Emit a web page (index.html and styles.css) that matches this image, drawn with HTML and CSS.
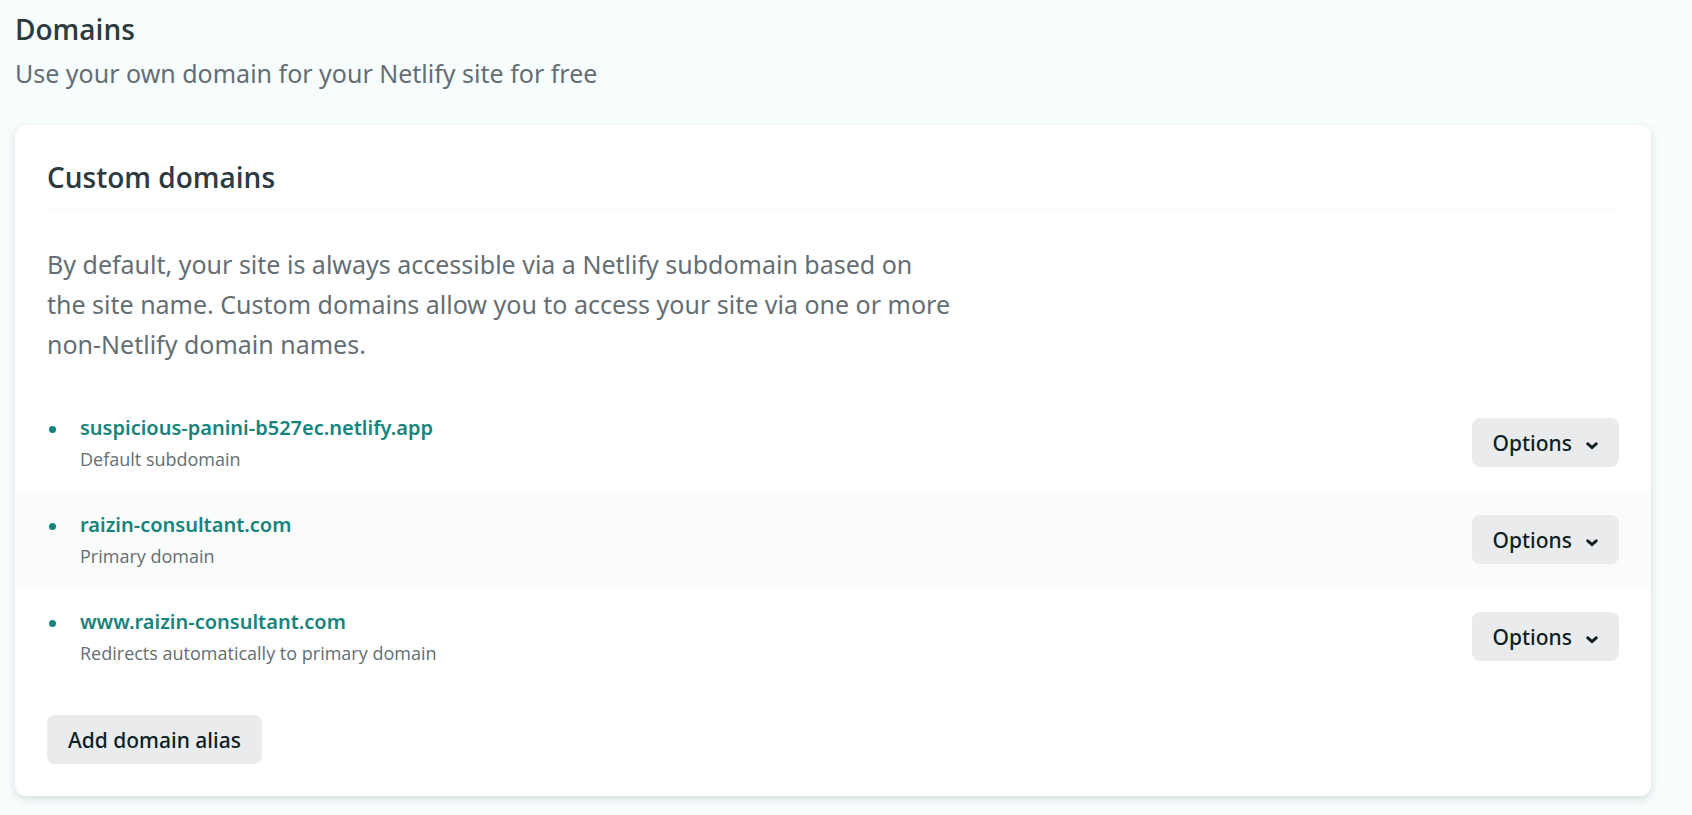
FILE: index.html
```html
<!DOCTYPE html>
<html lang="en">
<head>
<meta charset="utf-8">
<meta name="viewport" content="width=device-width, initial-scale=1">
<title>Domains</title>
<link rel="stylesheet" href="styles.css">
</head>
<body>
<main class="page">
  <header class="page-header">
    <h1 class="title">Domains</h1>
    <p class="lead">Use your own domain for your Netlify site for free</p>
  </header>
  <section class="card" aria-labelledby="custom-domains">
    <h2 class="title card-title" id="custom-domains">Custom domains</h2>
    <p class="lead card-text">By default, your site is always accessible via a Netlify subdomain based on the site name. Custom domains allow you to access your site via one or more non-Netlify domain names.</p>
    <ul class="domains">
      <li class="domain">
        <span class="bullet"></span>
        <div class="domain-info">
          <a class="domain-link" href="#">suspicious-panini-b527ec.netlify.app</a>
          <p class="domain-note">Default subdomain</p>
        </div>
        <button class="button" type="button">Options <svg class="chevron" viewBox="0 0 12 8" aria-hidden="true"><path d="M1.8 1.8 6 5.6l4.2-3.8"/></svg></button>
      </li>
      <li class="domain">
        <span class="bullet"></span>
        <div class="domain-info">
          <a class="domain-link" href="#">raizin-consultant.com</a>
          <p class="domain-note">Primary domain</p>
        </div>
        <button class="button" type="button">Options <svg class="chevron" viewBox="0 0 12 8" aria-hidden="true"><path d="M1.8 1.8 6 5.6l4.2-3.8"/></svg></button>
      </li>
      <li class="domain">
        <span class="bullet"></span>
        <div class="domain-info">
          <a class="domain-link" href="#">www.raizin-consultant.com</a>
          <p class="domain-note">Redirects automatically to primary domain</p>
        </div>
        <button class="button" type="button">Options <svg class="chevron" viewBox="0 0 12 8" aria-hidden="true"><path d="M1.8 1.8 6 5.6l4.2-3.8"/></svg></button>
      </li>
    </ul>
    <button class="button" type="button">Add domain alias</button>
  </section>
</main>
</body>
</html>
```
FILE: styles.css
```css
* {
  box-sizing: border-box;
}

body {
  margin: 0;
  background: #f7fdfd;
  color: #2d3b41;
  font-family: "Open Sans", "Noto Sans", sans-serif;
}

h1, h2, p, ul {
  margin: 0;
  padding: 0;
}

.page {
  padding: 9px 41px 15px 15px;
}

.page-header {
  margin-bottom: 32px;
}

.title {
  font-size: 28px;
  line-height: 40px;
  font-weight: 600;
}

.lead {
  color: #646e73;
  font-family: "Noto Sans", "Open Sans", sans-serif;
  font-size: 25px;
  line-height: 40px;
}

.page-header .lead {
  margin-top: 4px;
}

.card {
  padding: 32px;
  border-radius: 11px;
  background: #fff;
  box-shadow: 0 3px 8px rgba(14, 30, 37, 0.14);
}

.card-title {
  padding-bottom: 11px;
  border-bottom: 3px solid #fafbfb;
}

.card-text {
  max-width: 908px;
  margin-top: 33px;
}

.domains {
  margin: 30px -32px;
  list-style: none;
}

.domain {
  display: flex;
  align-items: center;
  padding: 16px 32px;
}

.domain:nth-child(even) {
  background: #fafbfb;
}

.bullet {
  align-self: flex-start;
  width: 7px;
  height: 7px;
  margin: 16px 24px 0 2px;
  border-radius: 50%;
  background: #15847d;
}

.domain-info {
  flex: 1;
  padding-bottom: 3px;
}

.domain-link {
  display: block;
  width: fit-content;
  color: #15847d;
  font-family: "Noto Sans", "Open Sans", sans-serif;
  font-size: 20px;
  line-height: 36px;
  font-weight: 600;
  text-decoration: none;
}

.domain-note {
  color: #646e73;
  font-size: 18px;
  line-height: 26px;
}

.button {
  display: flex;
  align-items: center;
  gap: 14px;
  width: fit-content;
  padding: 9px 21px 7px;
  border: 0;
  border-radius: 8px;
  background: #e9ebed;
  color: #0e1e25;
  font: 500 21px/33px "Noto Sans", "Open Sans", sans-serif;
  cursor: pointer;
}

.chevron {
  width: 12px;
  height: 8px;
  margin-top: 4px;
  fill: none;
  stroke: currentColor;
  stroke-width: 3;
  stroke-linecap: round;
}
```
